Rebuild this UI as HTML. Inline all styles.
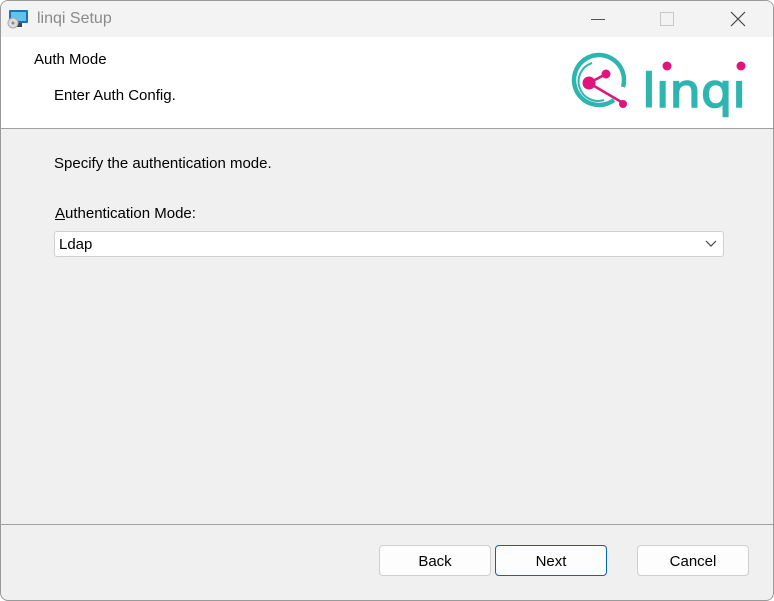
<!DOCTYPE html><html><head><style>
body{margin:0;width:774px;height:601px;overflow:hidden;background:#fff;font-family:"Liberation Sans",sans-serif;}
.win{position:absolute;left:0;top:0;width:772px;height:599px;border:1px solid #9a9a9a;border-radius:8px;background:#f0f0f0;overflow:hidden}
.title{position:absolute;left:0;top:0;width:772px;height:36px;background:#f3f3f3}
.t{position:absolute;font-size:16px;color:#8a8a8a;left:36px;top:9px}
.hdr{position:absolute;left:0;top:36px;width:772px;height:91px;background:#fff;border-bottom:1px solid #a0a0a0}
.txt{position:absolute;font-size:15px;color:#000}
.btn{position:absolute;top:544px;width:112px;height:31px;border:1px solid #cfcfcf;border-radius:4px;background:#fdfdfd;font-size:15px;text-align:center;line-height:31px;box-sizing:border-box}
</style></head><body><div class="win">
<div class="title">
<svg style="position:absolute;left:6px;top:8px" width="22" height="20"><rect x="2" y="1" width="19" height="13" rx="1" fill="#1f6fb8"/><rect x="4" y="3" width="15" height="9" fill="#5fc3ea"/><rect x="9" y="14" width="6" height="4" fill="#444"/><circle cx="6" cy="14" r="5" fill="#ddd" stroke="#aaa"/><circle cx="6" cy="14" r="1.5" fill="#888"/></svg>
<div class="t">linqi Setup</div>
<div style="position:absolute;left:590px;top:18px;width:14px;height:1px;background:#555"></div>
<div style="position:absolute;left:659px;top:11px;width:12px;height:12px;border:1px solid #c8c8c8"></div>
<svg style="position:absolute;left:729px;top:10px" width="16" height="16"><path d="M1 1L15 15M15 1L1 15" stroke="#444" stroke-width="1.2"/></svg>
</div>
<div class="hdr">
<div class="txt" style="left:33px;top:14px">Auth Mode</div>
<div class="txt" style="left:53px;top:50px">Enter Auth Config.</div>
<svg style="position:absolute;left:565px;top:10px" width="190" height="75">
<path d="M48 53 A25 25 0 1 1 57 40" fill="none" stroke="#2fb5b0" stroke-width="4.5"/>
<path d="M26 16 A19 19 0 0 0 38 53" fill="none" stroke="#2fb5b0" stroke-width="2"/>
<path d="M23 36 L40 27 M23 36 L57 56" stroke="#e0157b" stroke-width="2.5"/>
<circle cx="23" cy="36" r="6.5" fill="#e0157b"/><circle cx="40" cy="27" r="4.5" fill="#e0157b"/><circle cx="57" cy="57" r="4" fill="#e0157b"/>
<text x="76" y="60" font-family="DejaVu Sans,sans-serif" font-size="46" fill="#2fb5b0" textLength="104" lengthAdjust="spacingAndGlyphs" stroke="#2fb5b0" stroke-width="1.5">lınqı</text>
<circle cx="101" cy="19" r="4.5" fill="#e0157b"/><circle cx="175" cy="19" r="4.5" fill="#e0157b"/>
</svg>
</div>
<div class="txt" style="left:53px;top:154px">Specify the authentication mode.</div>
<div class="txt" style="left:54px;top:204px"><u>A</u>uthentication Mode:</div>
<div style="position:absolute;left:53px;top:230px;width:670px;height:26px;background:#fff;border:1px solid #d0d0d0;border-radius:3px;box-sizing:border-box"></div>
<div class="txt" style="left:58px;top:235px">Ldap</div>
<svg style="position:absolute;left:704px;top:239px" width="12" height="8"><path d="M1 1L6 6L11 1" fill="none" stroke="#444" stroke-width="1.2"/></svg>
<div style="position:absolute;left:0;top:523px;width:772px;height:1px;background:#a0a0a0"></div>
<div class="btn" style="left:378px">Back</div>
<div class="btn" style="left:494px;border-color:#0067c0">Next</div>
<div class="btn" style="left:636px">Cancel</div>
</div></body></html>
